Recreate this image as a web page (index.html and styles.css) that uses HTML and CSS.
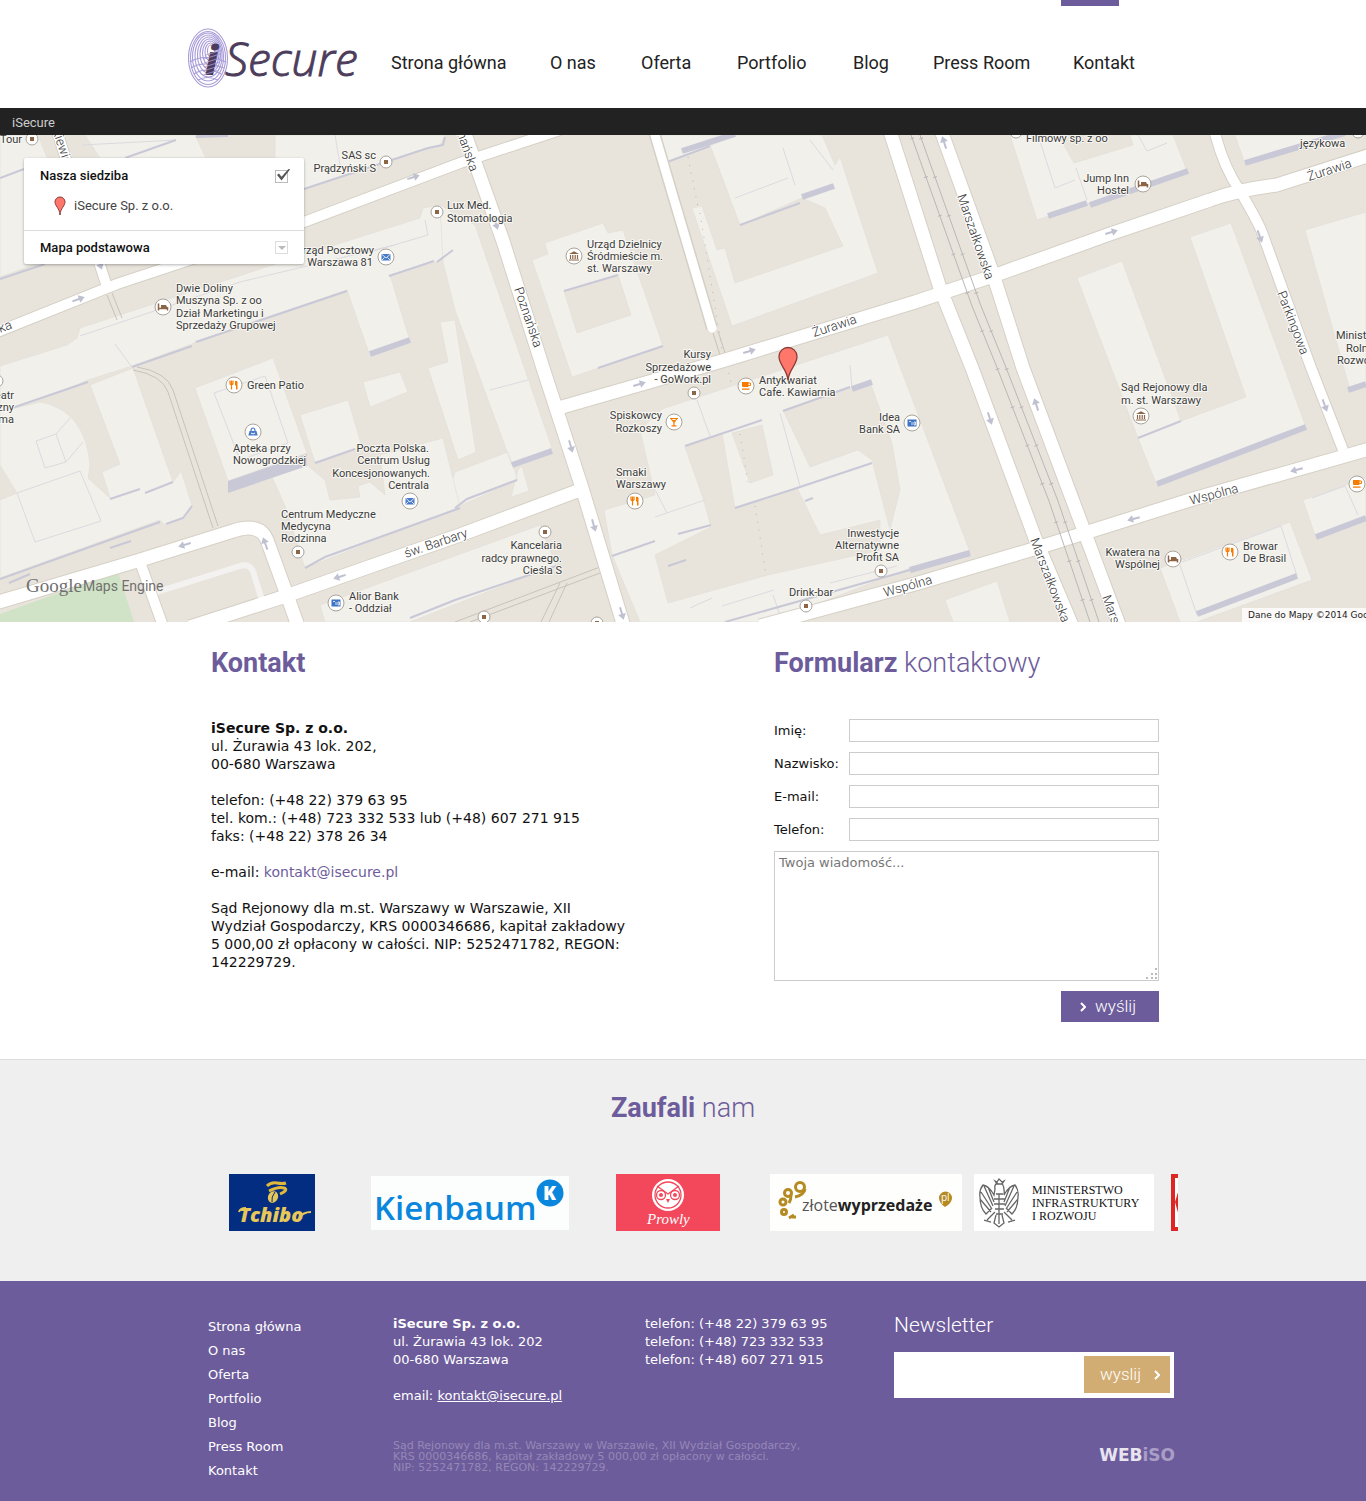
FILE: index.html
```html
<!DOCTYPE html>
<html lang="pl">
<head>
<meta charset="utf-8">
<meta name="viewport" content="width=device-width, initial-scale=1">
<title>iSecure - Kontakt</title>
<link rel="stylesheet" href="styles.css">
</head>
<body>
<header class="header">
  <div class="wrap header-in">
    <a class="logo" href="#" aria-label="iSecure">
      <svg width="176" height="64" viewBox="0 0 176 64">
        <g fill="none" stroke="#a79bd8" stroke-width="1.1">
          <ellipse cx="20" cy="32" rx="19.5" ry="29"/><ellipse cx="20" cy="32" rx="17.5" ry="26.5"/>
          <ellipse cx="20" cy="31" rx="15.5" ry="24"/><ellipse cx="20.500" cy="30" rx="13.500" ry="21"/>
          <ellipse cx="21" cy="29" rx="11.500" ry="18"/><ellipse cx="21.500" cy="28" rx="9.500" ry="15"/>
          <ellipse cx="22" cy="27" rx="7.500" ry="12"/><ellipse cx="22.500" cy="26" rx="5.500" ry="9"/>
          <ellipse cx="23" cy="25" rx="3.500" ry="6"/><path d="M3 42q12 -8 33 0M6 48q12 -8 27 0M10 54q9 -5 20 0M2 36q14 -9 36 0"/>
        </g>
        <text class="logo-i" x="17" y="49">i</text>
        <path d="M16 33l16 -5M16 37l16 -5M16 41l16 -5M15 45l16 -5M15 49l16 -5M18 29l16 -5" stroke="#a79bd8" stroke-width=".8"/>
        <text class="logo-text" x="37" y="50">Secure</text>
      </svg>
    </a>
    <nav class="nav">
      <a href="#">Strona główna</a><a href="#">O nas</a><a href="#">Oferta</a><a href="#">Portfolio</a><a href="#">Blog</a><a href="#">Press Room</a><a class="active" href="#">Kontakt</a>
    </nav>
  </div>
</header>

<section class="map">
  <div class="map-bar">iSecure</div>
  <div class="map-view">
    <svg class="map-svg" viewBox="0 135 1366 487" preserveAspectRatio="xMidYMid slice">
      <defs>
        <g id="dot"><circle r="6" fill="#fff" stroke="#a9a49c"/><rect x="-2" y="-2" width="4" height="4" fill="#8c6547"/></g>
        <g id="pin-bg"><circle r="8" fill="#fff" stroke="#a9a49c"/></g>
        <g id="bed"><use href="#pin-bg"/><path d="M-4.500 -3.500v7M4.500 0v3.500M-4.500 1.500h9" stroke="#8c6547" stroke-width="1.500"/><path d="M-2 -2h5l1.500 3h-6.500z" fill="#8c6547"/></g>
        <g id="food"><use href="#pin-bg"/><path d="M-4 -4.500v3q0 1 1.500 1v5M-1 -4.500v3q0 1 -1.500 1M-2.500 -4.500v4" stroke="#f57c00" stroke-width="1.200" fill="none"/><path d="M1 -4q3 -1 2.500 3v5.500h-1.500v-4h-1z" fill="#f57c00"/></g>
        <g id="cup"><use href="#pin-bg"/><path d="M-4 -4h6.500v4q0 1 -1 1h-4.500q-1 0 -1 -1zM-4 2.500h7.500v1.300h-7.500z" fill="#f57c00"/><path d="M2 -3h2.500v2.500h-2.500" fill="none" stroke="#f57c00"/></g>
        <g id="drink"><use href="#pin-bg"/><path d="M-4 -3.500h8M-3 -3.500l3 4 3 -4M0 0v3.500M-2.500 3.800h5M-2 -1.500h4" fill="none" stroke="#f57c00" stroke-width="1.200"/></g>
        <g id="mail"><use href="#pin-bg"/><rect x="-4.500" y="-3" width="9" height="6.500" fill="#4a7bc8"/><path d="M-4.500 -3l4.500 4 4.500 -4M-4.500 3.500l3 -3M4.500 3.500l-3 -3" stroke="#fff" stroke-width=".8" fill="none"/></g>
        <g id="bank"><use href="#pin-bg"/><rect x="-4.500" y="-3.500" width="9" height="7" fill="#3f73c4"/><path d="M-3 -1.500h2M0 -1v3M2 -1h1.500v3h-1.500z" stroke="#fff" stroke-width=".8" fill="none"/></g>
        <g id="gov"><use href="#pin-bg"/><path d="M-5 -2l5 -2.800 5 2.800z" fill="#8c6547"/><path d="M-3.500 -1v4M-1.200 -1v4M1.200 -1v4M3.500 -1v4M-5 4h10" stroke="#8c6547" stroke-width="1.200"/></g>
        <g id="bag"><use href="#pin-bg"/><path d="M-3.500 -1h7l1.200 4.500h-9.400z" fill="#4a7bc8"/><path d="M-2 -1q0 -3 2 -3t2 3" fill="none" stroke="#4a7bc8" stroke-width="1.200"/><path d="M-2 1q2 2 4 0" fill="none" stroke="#fff"/></g>
        <path id="arrow" d="M-7 -1h7v-3l6 4 -6 4v-3h-7z" fill="#bfc0d0"/>
      </defs>
      <rect y="135" width="1366" height="487" fill="#e8e4dc"/>
      <path fill="#d0e3c6" d="M0 614L118 572 134 622H0z"/>
      <g fill="#f2f0ea" stroke="#e3e0da" stroke-width=".7">
        <path d="M0 135H38L60 190 75 250 0 277zM85 135H195L206 158H100zM275 135H445L440 145 428 148 348 175 304 189 275 170z"/>
        <path d="M67 345L77 338 80 328 303 255 420 218 423 208 440 205 453 248 437 262 390 275 410 341 370 356 347 290 197 341 192 344 132 366 88 380 35 402 0 412V366z"/>
        <path d="M443 262L440 205 475 225 552 448 512 465 455 310zM428 368L448 362 440 322 455 320 476 452 458 460zM455 472L508 452 518 480 455 508 445 500zM518 470L522 466 529 491 511 497z"/>
        <path d="M90 385L133 368 173 482 181 471 192 505 183 518 165 525 160 520 0 578V500L17 493 0 465V412L40 402Q85 410 90 465L88 478 110 498 102 472 120 464z"/>
        <path d="M195 388L273 358 307 453 228 481zM300 415L348 400 362 447 315 463zM363 382L400 372 408 392 370 407z"/>
        <path d="M272 477L307 465 325 480 330 500 360 497 358 486 370 482 385 495 380 455 443 438 460 507 305 568 285 506z"/>
        <path d="M320 605L540 525 556 565 410 622H325z"/>
        <path fill-rule="evenodd" d="M545 243L603 223 608 233 623 230 663 346 572 377 532 260 548 254zM564 291L577 333 631 315 618 275z"/>
        <path d="M662 164L655 135H735L712 145zM710 145L735 135H822L835 165 840 157 878 273 732 326 692 208 702 206 717 250 725 248 735 283 843 246 825 208 802 198 740 225z"/>
        <path d="M1010 135H1058L1074 163 1133 145 1130 135H1173L1187 171 1037 220zM1235 135H1345L1245 164z"/>
        <path d="M1077 278L1122 261 1181 421 1246 397 1190 237 1231 223 1306 427 1157 486 1138 438zM1305 230L1366 212V385L1350 390zM1303 500L1366 478V517L1316 538zM1160 568L1290 522 1312 580 1197 622H1180zM945 600L997 581 1010 622H953z"/>
        <path fill-rule="evenodd" d="M640 430L662 409 888 335 970 552 910 568 770 622H640L612 555 604 510 655 495zM685 447L703 498 711 527 655 555 668 603 768 575 880 550V520L820 535 797 488 735 508 722 433zM783 410L810 467 858 450 872 460 890 530 900 490 892 443 870 382zM732 433L750 483 773 475 762 425z"/>
      </g>
      <g fill="none" stroke="#dcdae0">
        <path d="M214 393L265 376 288 443 240 460zM36 441L56 434 66 462 45 468zM56 434L70 418M66 462L83 442M17 493L80 471 101 521 35 542zM80 336L240 282 395 245M115 344L131 366M82 145L176 140M335 135L340 165M425 220L428 235 360 255M490 390L528 380M1038 135L1055 188 1075 180M1076 168L1087 200M1138 135L1147 151 1167 143M783 148L795 185M810 140L833 170M735 198L788 178M1312 498L1345 486 1358 515M1182 562L1281 526 1297 576M697 400L710 436M850 365L852 388M780 413L800 486M650 480L667 513M655 517L705 500M773 595L780 615M1197 615L1180 565M690 608L712 598M722 606L774 590M830 583L897 566"/>
      </g>
      <g fill="none" stroke="#c9c8d7" stroke-width="2">
        <path d="M0 279L45 264M0 178L24 169M125 158L176 140M445 137L443 145 428 148 304 189M453 250L437 262M434 261L389 276M347 291L196 342M192 346L132 367M88 382L12 408M0 579L160 522M166 524L183 518 192 506M110 499L140 489M145 493L173 482M315 463L355 449M305 568L325 557 405 528 460 508M455 508L467 499 517 480M455 600L556 566M455 600L410 618M110 548L131 541M9 583L30 574"/>
        <path d="M564 291L618 275M598 368L663 346M662 164L710 146M740 225L800 203M1138 438L1181 421M685 446L762 420M783 411L850 387M735 508L797 488 872 463M612 556L655 541M678 534L711 525M668 566L686 560M725 622L910 570 970 555M805 501L813 498"/>
      </g>
      <g fill="none" stroke="#c9c8d7" stroke-width="6">
        <path d="M410 340L370 354M512 465L552 451M682 151L735 134M802 197L834 186M852 389L872 382M1048 216L1087 203M1090 205L1188 171M1245 163L1345 133M1157 484L1306 427M1348 390L1366 384M1316 537L1366 518M1197 614L1297 576M910 570L970 553M196 135L228 134"/>
      </g>
      <path d="M228 481L307 454V466L228 493z" fill="#c9c8d7"/>
      <g fill="none" stroke="#c8c3b8">
        <path d="M107 295L117 320M112 293L122 318M133 370Q162 375 168 392L213 528M137 367Q167 372 173 390L218 526M455 622L600 567M470 622L600 573M541 622L560 583M549 622L567 583M713 333L720 355M718 331L725 353"/>
        <path d="M688 157L698 207M700 213L722 350M727 365L731 383M740 434L748 482M755 506L766 575" stroke="#b8b5b5" stroke-dasharray="1 7"/>
      </g>
      <g fill="none" stroke-linecap="butt" stroke="#d5d0c5">
        <path stroke-width="12" d="M-10 335L117 284 304 222 460 163 560 130M55 125L107 287M652 125L712 328"/>
        <path stroke-width="15" d="M460 120L503 241 543 368 582 488 625 630M562 407L722 361 915 302 993 276 1110 234 1210 200Q1237 190 1277 185L1380 152M888 125L940 288 972 368 1035 538 1074 630M939 125L993 274 1023 368 1083 528 1121 630M760 626L915 584 1037 548 1193 499 1380 446M190 627L283 597 460 535 580 490M-8 604L137 561 233 531Q260 522 267 540L287 595 298 626"/>
        <path stroke-width="12" d="M1213 125Q1222 165 1240 191 1260 225 1263 235L1310 365 1343 450M140 562L163 626"/>
      </g>
      <path d="M157 592L240 566Q252 562 255 578L262 600" fill="none" stroke="#f3f2f0" stroke-width="6"/>
      <g fill="none" stroke="#fff">
        <path stroke-width="10" d="M-10 335L117 284 304 222 460 163 560 130M55 125L107 287"/>
        <path stroke-width="9" stroke-linecap="round" d="M652 125L712 328"/>
        <path stroke-width="13" d="M460 120L503 241 543 368 582 488 625 630M562 407L722 361 915 302 993 276 1110 234 1210 200Q1237 190 1277 185L1380 152M888 125L940 288 972 368 1035 538 1074 630M939 125L993 274 1023 368 1083 528 1121 630M760 626L915 584 1037 548 1193 499 1380 446M190 627L283 597 460 535 580 490M-8 604L137 561 233 531Q260 522 267 540L287 595 298 626"/>
        <path stroke-width="10" d="M1213 125Q1222 165 1240 191 1260 225 1263 235L1310 365 1343 450M140 562L163 626"/>
      </g>
      <g fill="none" stroke="#b9b7b7">
        <path d="M911 135L972 306 996 365 1049 501 1090 622M920 135L981 306 1005 365 1058 501 1099 622"/>
        <path stroke-width="4" stroke-dasharray="1 40" d="M912 138L972 306 996 365 1049 501 1090 622M921 138L981 306 1005 365 1058 501 1099 622"/>
      </g>
      <use href="#arrow" transform="translate(414 177) rotate(-18)"/><use href="#arrow" transform="translate(79 299) rotate(-20)"/>
      <use href="#arrow" transform="translate(496 224) rotate(72)"/><use href="#arrow" transform="translate(100 264) rotate(72)"/>
      <use href="#arrow" transform="translate(750 351) rotate(-17)"/><use href="#arrow" transform="translate(640 384) rotate(-17)"/>
      <use href="#arrow" transform="translate(571 447) rotate(74)"/><use href="#arrow" transform="translate(594 526) rotate(74)"/><use href="#arrow" transform="translate(622 614) rotate(74)"/>
      <use href="#arrow" transform="translate(944 142) rotate(-108)"/><use href="#arrow" transform="translate(1112 232) rotate(-17)"/>
      <use href="#arrow" transform="translate(1260 237) rotate(70)"/><use href="#arrow" transform="translate(1325 406) rotate(70)"/>
      <use href="#arrow" transform="translate(990 419) rotate(72)"/><use href="#arrow" transform="translate(1036 404) rotate(-108)"/>
      <use href="#arrow" transform="translate(1133 519) rotate(165)"/><use href="#arrow" transform="translate(1296 470) rotate(165)"/>
      <use href="#arrow" transform="translate(184 545) rotate(164)"/><use href="#arrow" transform="translate(339 577) rotate(162)"/><use href="#arrow" transform="translate(265 543) rotate(-110)"/>

      <g class="street">
        <text transform="translate(957 196) rotate(71)">Marszałkowska</text>
        <text transform="translate(1030 540) rotate(69)">Marszałkowska</text>
        <text transform="translate(1102 597) rotate(70)">Marszałkowska</text>
        <text transform="translate(514 289) rotate(71)">Poznańska</text>
        <text transform="translate(450 113) rotate(71)">Poznańska</text>
        <text transform="translate(1277 293) rotate(69)">Parkingowa</text>
        <text transform="translate(48 118) rotate(71)">ankiewicza</text>
        <text transform="translate(814 337) rotate(-18)">Żurawia</text>
        <text transform="translate(1309 181) rotate(-18)">Żurawia</text>
        <text transform="translate(1191 505) rotate(-15)">Wspólna</text>
        <text transform="translate(885 597) rotate(-16)">Wspólna</text>
        <text transform="translate(406 558) rotate(-19)">św. Barbary</text>
        <text transform="translate(-6 335) rotate(-20)">ska</text>
      </g>
      <g class="poi">
        <text x="0" y="143">Tour</text>
        <text text-anchor="end"><tspan x="376" y="159">SAS sc</tspan><tspan x="376" y="172">Prądzyński S</tspan></text>
        <text><tspan x="447" y="209">Lux Med.</tspan><tspan x="447" y="222">Stomatologia</tspan></text>
        <text text-anchor="end"><tspan x="374" y="254">Urząd Pocztowy</tspan><tspan x="373" y="266">Warszawa 81</tspan></text>
        <text><tspan x="176" y="292">Dwie Doliny</tspan><tspan x="176" y="304">Muszyna Sp. z oo</tspan><tspan x="176" y="317">Dział Marketingu i</tspan><tspan x="176" y="329">Sprzedaży Grupowej</tspan></text>
        <text><tspan x="587" y="248">Urząd Dzielnicy</tspan><tspan x="587" y="260">Śródmieście m.</tspan><tspan x="587" y="272">st. Warszawy</tspan></text>
        <text text-anchor="end"><tspan x="711" y="358">Kursy</tspan><tspan x="711" y="371">Sprzedażowe</tspan><tspan x="711" y="383">- GoWork.pl</tspan></text>
        <text><tspan x="759" y="384">Antykwariat</tspan><tspan x="759" y="396">Cafe. Kawiarnia</tspan></text>
        <text text-anchor="end"><tspan x="662" y="419">Spiskowcy</tspan><tspan x="662" y="432">Rozkoszy</tspan></text>
        <text text-anchor="end"><tspan x="900" y="421">Idea</tspan><tspan x="900" y="433">Bank SA</tspan></text>
        <text><tspan x="616" y="476">Smaki</tspan><tspan x="616" y="488">Warszawy</tspan></text>
        <text x="247" y="389">Green Patio</text>
        <text><tspan x="233" y="452">Apteka przy</tspan><tspan x="233" y="464">Nowogrodzkiej</tspan></text>
        <text text-anchor="end"><tspan x="429" y="452">Poczta Polska.</tspan><tspan x="430" y="464">Centrum Usług</tspan><tspan x="430" y="477">Koncesjonowanych.</tspan><tspan x="429" y="489">Centrala</tspan></text>
        <text><tspan x="281" y="518">Centrum Medyczne</tspan><tspan x="281" y="530">Medycyna</tspan><tspan x="281" y="542">Rodzinna</tspan></text>
        <text text-anchor="end"><tspan x="562" y="549">Kancelaria</tspan><tspan x="562" y="562">radcy prawnego.</tspan><tspan x="562" y="574">Cieśla S</tspan></text>
        <text><tspan x="349" y="600">Alior Bank</tspan><tspan x="349" y="612">- Oddział</tspan></text>
        <text text-anchor="end"><tspan x="899" y="537">Inwestycje</tspan><tspan x="899" y="549">Alternatywne</tspan><tspan x="899" y="561">Profit SA</tspan></text>
        <text x="789" y="596">Drink-bar</text>
        <text text-anchor="end"><tspan x="1129" y="182">Jump Inn</tspan><tspan x="1129" y="194">Hostel</tspan></text>
        <text x="1026" y="142">Filmowy sp. z oo</text><text x="1300" y="147">językowa</text>
        <text><tspan x="1121" y="391">Sąd Rejonowy dla</tspan><tspan x="1121" y="404">m. st. Warszawy</tspan></text>
        <text><tspan x="1336" y="339">Ministerstwo</tspan><tspan x="1346" y="352">Rolnictwa</tspan><tspan x="1337" y="364">Rozwoju</tspan></text>
        <text text-anchor="end"><tspan x="1160" y="556">Kwatera na</tspan><tspan x="1160" y="568">Wspólnej</tspan></text>
        <text><tspan x="1243" y="550">Browar</tspan><tspan x="1243" y="562">De Brasil</tspan></text>
        <text text-anchor="end"><tspan x="14" y="399">Teatr</tspan><tspan x="14" y="411">liczny</tspan><tspan x="14" y="423">Roma</tspan></text>
      </g>
      <use href="#dot" x="32" y="139"/><use href="#dot" x="386" y="162"/><use href="#dot" x="437" y="212"/><use href="#dot" x="694" y="393"/><use href="#dot" x="545" y="532"/><use href="#dot" x="298" y="552"/><use href="#dot" x="484" y="617"/><use href="#dot" x="597" y="623"/><use href="#dot" x="881" y="571"/><use href="#dot" x="806" y="606"/><use href="#dot" x="1016" y="132"/><use href="#dot" x="-3" y="381"/><use href="#dot" x="1358" y="132"/>
      <use href="#bed" x="163" y="307"/><use href="#bed" x="1143" y="184"/><use href="#bed" x="1173" y="559"/>
      <use href="#food" x="234" y="385"/><use href="#food" x="635" y="501"/><use href="#food" x="1230" y="552"/>
      <use href="#cup" x="746" y="386"/><use href="#cup" x="1357" y="484"/><use href="#drink" x="674" y="422"/>
      <use href="#mail" x="386" y="257"/><use href="#mail" x="410" y="501"/><use href="#bank" x="912" y="423"/><use href="#bank" x="336" y="603"/>
      <use href="#gov" x="574" y="256"/><use href="#gov" x="1141" y="416"/><use href="#bag" x="253" y="432"/>
      <path d="M788 380C787 369 779 365 779 356.500A9 9 0 0 1 797 356.500C797 365 789 369 788 380z" fill="#ff776b" stroke="#8c3a35" stroke-width="1.300"/>
      <g fill="#707070"><text class="google" x="26" y="592">Google</text><text class="engine" x="83" y="591">Maps Engine</text></g>
    </svg>
    <div class="panel">
      <div class="panel-top">
        <label class="panel-row"><b>Nasza siedziba</b><input class="tick" type="checkbox" checked></label>
        <div class="place"><svg width="12" height="20" viewBox="0 0 12 20"><path d="M6 19C5.500 12 1 10 1 6A5 5 0 0 1 11 6C11 10 6.500 12 6 19z" fill="#ff776b" stroke="#8c3a35"/></svg>iSecure Sp. z o.o.</div>
      </div>
      <div class="panel-row panel-base"><b>Mapa podstawowa</b><button class="drop" type="button" aria-label="Rozwiń"></button></div>
    </div>
    <div class="credit">Dane do Mapy ©2014 Google</div>
  </div>
</section>

<main class="wrap contact">
  <section>
    <h1 class="title"><b>Kontakt</b></h1>
    <div class="address">
      <p><b>iSecure Sp. z o.o.</b><br>ul. Żurawia 43 lok. 202,<br>00-680 Warszawa</p>
      <p>telefon: (+48 22) 379 63 95<br>tel. kom.: (+48) 723 332 533 lub (+48) 607 271 915<br>faks: (+48 22) 378 26 34</p>
      <p>e-mail: <a href="#">kontakt@isecure.pl</a></p>
      <p>Sąd Rejonowy dla m.st. Warszawy w Warszawie, XII<br>Wydział Gospodarczy, KRS 0000346686, kapitał zakładowy<br>5 000,00 zł opłacony w całości. NIP: 5252471782, REGON:<br>142229729.</p>
    </div>
  </section>
  <section>
    <h2 class="title"><b>Formularz</b> kontaktowy</h2>
    <form class="form">
      <label for="f1">Imię:</label><input id="f1" type="text">
      <label for="f2">Nazwisko:</label><input id="f2" type="text">
      <label for="f3">E-mail:</label><input id="f3" type="email">
      <label for="f4">Telefon:</label><input id="f4" type="tel">
      <div class="message">
        <textarea aria-label="Twoja wiadomość" placeholder="Twoja wiadomość..."></textarea>
        <svg class="grip" width="12" height="12" viewBox="0 0 12 12" fill="#bbb"><path d="M9 0h2v2H9zM9 5h2v2H9zM9 9h2v2H9zM5 5h2v2H5zM5 9h2v2H5zM0 9h2v2H0z"/></svg>
      </div>
      <button class="send" type="button"><svg width="6" height="10" viewBox="0 0 6 10"><path d="M1 1l4 4-4 4" fill="none" stroke="#fff" stroke-width="2"/></svg>wyślij</button>
    </form>
  </section>
</main>

<section class="trusted">
  <h2 class="title"><b>Zaufali</b> nam</h2>
  <div class="wrap">
    <div class="carousel">
      <a href="#"><svg width="86" height="57" viewBox="0 0 86 57"><rect width="86" height="57" fill="#032d80"/><g fill="none" stroke="#e0b83c"><path stroke-width="3" d="M38 12q4 -4 10 -3t9 0M40 17q10 -5 15 -3t-4 6"/></g><ellipse cx="44" cy="23" rx="5" ry="6" transform="rotate(25 44 23)" fill="#e8c75a"/><path d="M46 18q-4 5 -3 10" fill="none" stroke="#032d80"/><path d="M10 38q1 -4 7 -4M70 44q4 -6 12 -6" fill="none" stroke="#e8c75a" stroke-width="2"/><text class="tchibo" x="10" y="48">Tchibo</text></svg></a>
      <a href="#"><svg width="198" height="54" viewBox="0 0 198 54"><rect width="198" height="54" fill="#fcfefd"/><text class="kien" x="3" y="44">Kienbaum</text><circle cx="179" cy="17" r="13.500" fill="#0a87dc"/><text class="kien-k" x="172" y="24">K</text></svg></a>
      <a href="#"><svg width="104" height="57" viewBox="0 0 104 57"><rect width="104" height="57" fill="#f3485c"/><circle cx="52" cy="21" r="16" fill="#fff"/><g fill="none" stroke="#f3485c" stroke-width="1.300"><circle cx="52" cy="21" r="13"/><path d="M41 12l11 8 11 -8"/><circle cx="45" cy="21" r="4.500"/><circle cx="59" cy="21" r="4.500"/></g><g fill="#f3485c"><circle cx="45" cy="21" r="2"/><circle cx="59" cy="21" r="2"/><path d="M50 25h4l-2 4z"/></g><text class="prowly" x="31" y="50">Prowly</text></svg></a>
      <a href="#"><svg width="192" height="57" viewBox="0 0 192 57"><rect width="192" height="57" fill="#fefefc"/><g fill="none" stroke="#b58a22" stroke-width="3"><circle cx="30" cy="13" r="4.500"/><path d="M35 15q-1 6 -10 8" /><circle cx="18" cy="19" r="3.500"/><path d="M21 21q0 5 -2 8"/><circle cx="13" cy="28" r="3"/><circle cx="14" cy="38" r="2.500"/><path d="M19 44l5 -3M22 43h4" /></g><text class="zlote" x="32" y="37">złote<tspan class="wyp">wyprzedaże</tspan></text><path d="M175 33q-6 -4 -6 -9a6.500 6.500 0 0 1 13 0q0 5 -7 9z" fill="#b58a22"/><text class="pl" x="171" y="27">pl</text></svg></a>
      <a href="#"><svg width="180" height="57" viewBox="0 0 180 57"><rect width="180" height="57" fill="#fff"/><g fill="none" stroke="#666" stroke-width="1.300"><path d="M24 9q-4 1 -3 6l-1 6q-5 -9 -11 -10q-4 5 -3 12q0 11 6 17l6 -6M28 9q3 5 2 12q5 -9 11 -10q4 5 3 12q0 11 -6 17l-6 -6M10 12l9 20M7 18l11 17M6 25l11 13M40 12l-9 20M43 18l-11 17M44 25l-11 13M14 13l6 15M36 13l-6 15M22 20l7 0M20 25h11M20 30h11M21 35h9M22 40h7M21 38l-8 8M30 38l8 8M10 46l7 2M34 48l7 -2M22 41l-2 8 5 4 5 -4 -2 -8M25 20v30"/><path d="M21 7l2 3h5l2 -3-2 1-3 -3-2 3z"/></g><g class="mir"><text x="58" y="20">MINISTERSTWO</text><text x="58" y="33">INFRASTRUKTURY</text><text x="58" y="46">I ROZWOJU</text></g></svg></a>
      <a href="#"><svg width="182" height="57" viewBox="0 0 182 57"><rect width="182" height="57" fill="#dc2723"/><path d="M4 4H178V53H4z" fill="#fff"/><path d="M8 15L4 28 8 42z" fill="#dc2723"/></svg></a>
    </div>
  </div>
</section>

<footer class="footer">
  <div class="wrap foot-grid">
    <nav class="foot-nav"><a href="#">Strona główna</a><a href="#">O nas</a><a href="#">Oferta</a><a href="#">Portfolio</a><a href="#">Blog</a><a href="#">Press Room</a><a href="#">Kontakt</a></nav>
    <div class="foot-mid">
      <div class="foot-cols">
        <p><b>iSecure Sp. z o.o.</b><br>ul. Żurawia 43 lok. 202<br>00-680 Warszawa<br><br>email: <a href="#">kontakt@isecure.pl</a></p>
        <p>telefon: (+48 22) 379 63 95<br>telefon: (+48) 723 332 533<br>telefon: (+48) 607 271 915</p>
      </div>
      <p class="legal">Sąd Rejonowy dla m.st. Warszawy w Warszawie, XII Wydział Gospodarczy,<br>KRS 0000346686, kapitał zakładowy 5 000,00 zł opłacony w całości.<br>NIP: 5252471782, REGON: 142229729.</p>
    </div>
    <div class="foot-right">
      <label class="news-title" for="news">Newsletter</label>
      <form class="news"><input id="news" type="email"><button type="button">wyslij<svg width="6" height="10" viewBox="0 0 6 10"><path d="M1 1l4 4-4 4" fill="none" stroke="#fff" stroke-width="2"/></svg></button></form>
      <a class="webiso" href="#">WEB<span>iSO</span></a>
    </div>
  </div>
</footer>
</body>
</html>
```
FILE: styles.css
```css
* { box-sizing: border-box; }
body { margin: 0; background: #fff; color: #111; font-family: Verdana, "DejaVu Sans", sans-serif; }
p { margin: 0; }
a { color: inherit; text-decoration: none; }
input, button, textarea { font: inherit; margin: 0; border-radius: 0; }
svg { display: block; }
.wrap { width: 100%; max-width: 990px; margin: 0 auto; }

.header { height: 108px; }
.header-in { display: flex; padding-top: 26px; }
.logo { width: 203px; }
.logo-text { font: italic 300 46px "Open Sans", sans-serif; fill: #4d3d5c; stroke: #4d3d5c; stroke-width: 1px; }
.logo-i { font: italic 800 40px "Open Sans", sans-serif; fill: #4d3d5c; }
.nav { display: grid; grid-template-columns: 159px 91px 96px 116px 80px 140px 70px; padding-top: 24px; font: 18px/26px Roboto, sans-serif; color: #222; }
.nav a { white-space: nowrap; }
.active { position: relative; }
.active::before { content: ""; position: absolute; left: -12px; top: -50px; width: 58px; height: 6px; background: #6d5c9b; }

.map-bar { height: 27px; padding: 2px 12px 0; background: #222; color: #ccc; font: 13px/25px Roboto, sans-serif; }
.map-view { position: relative; height: 487px; overflow: hidden; }
.map-svg { width: 100%; height: 100%; }
.poi { font: 11px Roboto, sans-serif; fill: #3c3c3c; stroke: #f8f7f3; stroke-width: 2px; paint-order: stroke; }
.street { font: 300 13px Roboto, sans-serif; fill: #333; stroke: #fff; stroke-width: 2px; paint-order: stroke; }
.google { font: 19px "Liberation Serif", serif; }
.engine { font: 14px Roboto, sans-serif; }
.panel { position: absolute; left: 24px; top: 23px; width: 280px; background: #fff; border-radius: 2px; box-shadow: 0 1px 3px rgba(0,0,0,.3); font: 13px/16px Roboto, sans-serif; color: #444; }
.panel b { font-weight: 500; color: #111; }
.panel-top { height: 73px; padding-top: 10px; border-bottom: 1px solid #ddd; }
.panel-row { display: flex; justify-content: space-between; align-items: center; padding: 0 16px; }
.panel-base { height: 33px; }
.tick { appearance: none; position: relative; width: 13px; height: 13px; border: 1px solid #bbb; }
.tick:checked::after { content: ""; position: absolute; left: 1px; top: -2px; width: 13px; height: 12px; background: #555; clip-path: polygon(0 55%, 15% 42%, 35% 68%, 92% 0, 100% 8%, 35% 100%); }
.drop { width: 13px; height: 13px; padding: 0; border: 1px solid #ddd; background: #fff; display: grid; place-items: center; }
.drop::after { content: ""; border: 4px solid transparent; border-top-color: #bbb; border-bottom: 0; }
.place { display: flex; align-items: center; gap: 8px; padding: 12px 30px; }
.credit { position: absolute; right: 0; bottom: 0; width: 124px; padding-left: 6px; overflow: hidden; white-space: nowrap; background: rgba(255,255,255,.8); color: #222; font: 9px/14px "DejaVu Sans", sans-serif; }

.contact { display: grid; grid-template-columns: 563px 385px; padding: 24px 0 37px 23px; }
.title { margin: 0; font: 300 27px/34px Roboto, sans-serif; color: #6d5c9b; }
.title b { font-weight: 700; }
.address { padding-top: 39px; font-size: 14px; line-height: 18px; }
.address p + p { margin-top: 18px; }
.address a { color: #6d5c9b; }
.form { display: grid; grid-template-columns: 75px 1fr; row-gap: 10px; padding-top: 39px; font-size: 13px; line-height: 23px; }
.form input { width: 100%; height: 23px; border: 1px solid #ccc; background: #fff; }
.message { position: relative; grid-column: 1 / 3; }
.message textarea { display: block; width: 100%; height: 130px; padding: 2px 4px; border: 1px solid #ccc; line-height: 18px; resize: none; }
.message textarea::placeholder { color: #777; }
.grip { position: absolute; right: 1px; bottom: 1px; }
.send { grid-column: 1 / 3; justify-self: end; display: flex; align-items: center; gap: 9px; width: 98px; height: 31px; padding: 0 19px; border: 0; background: #6d5c9b; color: #fff; font: 300 17px/31px Roboto, sans-serif; }

.trusted { height: 222px; padding-top: 31px; border-top: 1px solid #ddd; background: #efefef; text-align: center; }
.carousel { display: flex; align-items: center; margin-left: -15px; padding-top: 49px; overflow: hidden; }
.carousel a { flex: 0 0 198px; display: flex; justify-content: center; }
.tchibo { font: italic 800 20px "Open Sans", sans-serif; fill: #e8c75a; }
.kien { font: 600 33px "Open Sans", sans-serif; fill: #0a87dc; }
.kien-k { font: 800 19px "Open Sans", sans-serif; fill: #fff; }
.prowly { font: italic 15px "Liberation Serif", serif; fill: #fff; }
.zlote { font: 16px "Open Sans", sans-serif; fill: #555; }
.wyp { font-weight: 700; fill: #222; }
.pl { font: 10px "Open Sans", sans-serif; fill: #fff; }
.mir { font: 12px "Liberation Serif", serif; fill: #111; }

.footer { min-height: 220px; background: #6d5c9b; color: #fff; font-size: 13px; line-height: 18px; }
.foot-grid { display: grid; grid-template-columns: 185px 501px 284px; padding: 34px 0 18px 20px; }
.foot-nav { display: flex; flex-direction: column; line-height: 24px; }
.foot-cols { display: grid; grid-template-columns: 252px 1fr; }
.foot-cols a { text-decoration: underline; }
.legal { padding-top: 35px; font-size: 11px; line-height: 11px; color: #9488b7; }
.news-title { display: block; font: 300 21px/20px Roboto, sans-serif; }
.news { display: flex; width: 280px; height: 46px; margin-top: 17px; padding: 4px; background: #fff; }
.news input { flex: 1; min-width: 0; border: 0; background: #fff; }
.news button { width: 86px; height: 37px; display: flex; align-items: center; justify-content: space-between; padding: 0 10px 0 16px; border: 0; background: #d2ad73; color: #fff; font: 300 17px/37px Roboto, sans-serif; }
.webiso { display: block; width: 281px; margin-top: 48px; text-align: right; color: #e8e4f0; font: bold 17px/18px "DejaVu Sans", sans-serif; }
.webiso span { color: #a99ec6; }
```
